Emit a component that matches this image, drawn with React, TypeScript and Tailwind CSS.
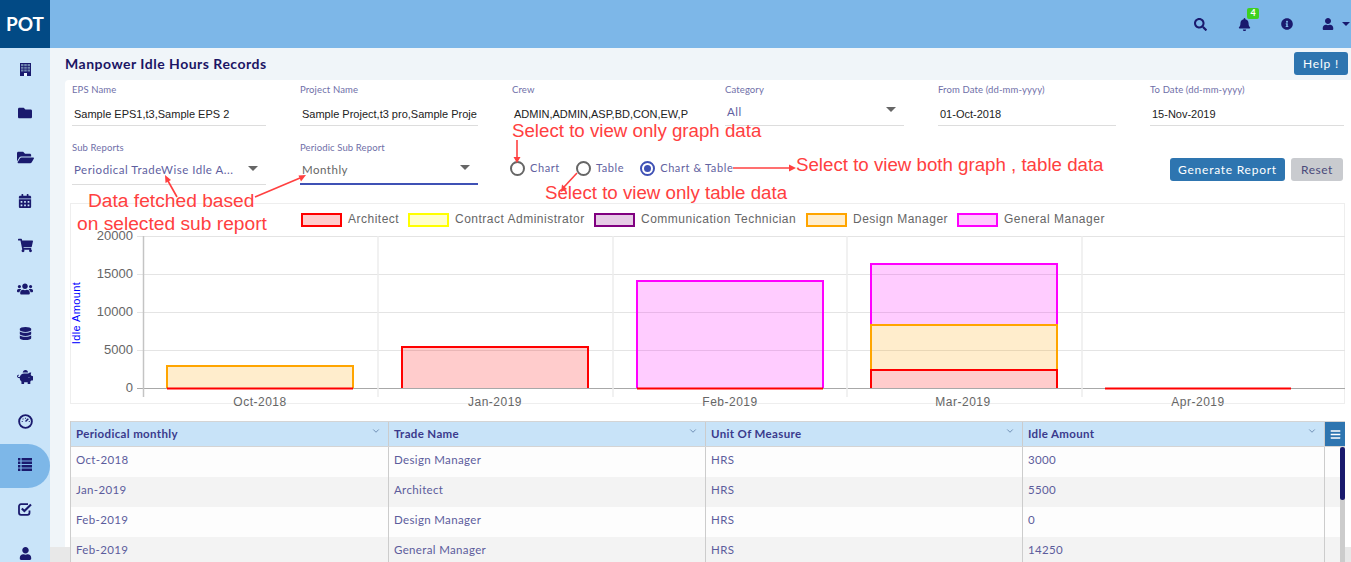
import {
  FaBars,
  FaBell,
  FaCalendarAlt,
  FaDatabase,
  FaFolder,
  FaFolderOpen,
  FaInfoCircle,
  FaPiggyBank,
  FaSearch,
  FaShoppingCart,
  FaUser,
  FaUsers,
} from "react-icons/fa";
import { ChevronDown } from "lucide-react";

function GaugeIcon() {
  return (
    <svg width="15" height="15" viewBox="0 0 16 16" fill="none" stroke="#1a1a6e">
      <circle cx="8" cy="8" r="6.8" strokeWidth="2" />
      <path d="M8 8 L11 5" strokeWidth="1.6" />
      <path d="M4 8h1M8 4v1M11.5 8h1M5 5l.7.7" strokeWidth="1.2" />
    </svg>
  );
}

function BuildingIcon() {
  return (
    <svg width="11" height="13" viewBox="0 0 11 13">
      <rect width="11" height="13" fill="#1a1a6e" />
      <path d="M1 1h2.5v2H1zM4.2 1h2.6v2H4.2zM7.5 1H10v2H7.5zM1 3.7h2.5v2H1zM4.2 3.7h2.6v2H4.2zM7.5 3.7H10v2H7.5zM1 6.4h2.5v2H1zM4.2 6.4h2.6v2H4.2zM7.5 6.4H10v2H7.5z" fill="#6f86ad" />
      <rect x="4" y="10" width="3" height="3" fill="#eaf4fc" />
    </svg>
  );
}

function ListIcon() {
  return (
    <svg width="14" height="13" viewBox="0 0 14 13" fill="#1a1a6e" className="-mt-[2px]">
      <path d="M0 0h2.4v2.4H0zM3.6 0H14v2.4H3.6zM0 3.5h2.4v2.4H0zM3.6 3.5H14v2.4H3.6zM0 7h2.4v2.4H0zM3.6 7H14v2.4H3.6zM0 10.5h2.4v2.4H0zM3.6 10.5H14v2.4H3.6z" />
    </svg>
  );
}

function CheckIcon() {
  return (
    <svg width="14" height="13" viewBox="0 0 14 13" fill="none" stroke="#1a1a6e">
      <path d="M10 1.2H3A2 2 0 0 0 1 3.2v6.6a2 2 0 0 0 2 2h6.5a2 2 0 0 0 2-2V7.5" strokeWidth="1.8" />
      <path d="M3.8 5.4 6.4 8 13 1.6" strokeWidth="2.1" />
    </svg>
  );
}

const navIcons = [
  <BuildingIcon key="a" />,
  <FaFolder key="b" size={14} />,
  <FaFolderOpen key="c" size={17} />,
  <FaCalendarAlt key="d" size={14} />,
  <FaShoppingCart key="e" size={15} />,
  <FaUsers key="f" size={16} />,
  <FaDatabase key="g" size={13} />,
  <FaPiggyBank key="h" size={16} />,
  <GaugeIcon key="i" />,
  <ListIcon key="j" />,
  <CheckIcon key="k" />,
  <FaUser key="l" size={13} />,
];

function Label({ children }: { children: string }) {
  return <div className="h-[12px] text-[9.5px] leading-[12px] tracking-[0.12px] text-[#6f6fa8]">{children}</div>;
}

function TextField({ label, value, line = true }: { label: string; value: string; line?: boolean }) {
  return (
    <div>
      <Label>{label}</Label>
      <div
        className={`mt-[2px] h-[28px] overflow-hidden whitespace-nowrap pl-[2px] font-['Liberation_Sans',sans-serif] text-[11px] leading-[32px] text-[#222] ${
          line ? "border-b border-[#ddd]" : ""
        }`}
      >
        {value}
      </div>
    </div>
  );
}

function SelectField({
  label,
  value,
  active = false,
  muted = false,
  tall = false,
}: {
  label: string;
  value: string;
  active?: boolean;
  muted?: boolean;
  tall?: boolean;
}) {
  return (
    <div>
      <Label>{label}</Label>
      <div
        className={`mt-[2px] flex items-center justify-between pl-[2px] pr-[8px] text-[11.5px] tracking-[0.5px] ${
          tall ? "h-[29px]" : "h-[28px]"
        } ${active ? "border-b-2 border-[#3f51b5]" : "border-b border-[#ddd]"} ${
          muted ? "text-[#666]" : "text-[#5f5f9f]"
        }`}
      >
        <span>{value}</span>
        <span className="mb-[4px] h-0 w-0 border-x-[5px] border-t-[5px] border-x-transparent border-t-[#666]" />
      </div>
    </div>
  );
}

function Radio({ label, checked = false }: { label: string; checked?: boolean }) {
  return (
    <label className="flex items-center gap-[5px] text-[11px] tracking-[0.6px] text-[#6262a0]">
      <span
        className={`flex h-[15px] w-[15px] items-center justify-center rounded-full border-2 ${
          checked ? "border-[#3f51b5]" : "border-[#666]"
        }`}
      >
        {checked && <span className="h-[7px] w-[7px] rounded-full bg-[#3f51b5]" />}
      </span>
      {label}
    </label>
  );
}

const series = [
  { name: "Architect", stroke: "#ff0000", box: 301, text: 348 },
  { name: "Contract Administrator", stroke: "#ffff00", box: 408, text: 455 },
  { name: "Communication Technician", stroke: "#800080", box: 594, text: 641 },
  { name: "Design Manager", stroke: "#ffa500", box: 806, text: 853 },
  { name: "General Manager", stroke: "#ff00ff", box: 957, text: 1004 },
];

const [architect, , , design, general] = series;

const bars = [
  { x: 167, top: 366, bottom: 388, c: design.stroke },
  { x: 402, top: 347, bottom: 388, c: architect.stroke },
  { x: 637, top: 281, bottom: 388, c: general.stroke },
  { x: 871, top: 264, bottom: 325, c: general.stroke },
  { x: 871, top: 325, bottom: 370, c: design.stroke },
  { x: 871, top: 370, bottom: 388, c: architect.stroke },
];

function Chart() {
  const grid = [236, 274, 312, 350, 388];
  const ticks = ["20000", "15000", "10000", "5000", "0"];
  const verticals = [378, 613, 847, 1082];
  const months = [
    ["Oct-2018", 260],
    ["Jan-2019", 495],
    ["Feb-2019", 730],
    ["Mar-2019", 963],
    ["Apr-2019", 1198],
  ] as const;
  const barWidth = 186;
  return (
    <svg
      width="1275"
      height="207"
      viewBox="70 203 1275 207"
      className="block"
      fontFamily="'Liberation Sans', sans-serif"
    >
      <rect x={70.5} y={203.5} width={1274} height={200} fill="none" stroke="#eee" />
      {series.map((s) => (
        <g key={s.name}>
          <rect
            x={s.box + 1}
            y={214}
            width={39}
            height={12}
            fill={s.stroke}
            fillOpacity="0.2"
            stroke={s.stroke}
            strokeWidth="2"
          />
          <text x={s.text} y={223} fontSize="12" letterSpacing="0.5" fill="#666">
            {s.name}
          </text>
        </g>
      ))}
      {grid.map((y, i) => (
        <g key={y}>
          <line x1={137} x2={1345} y1={y + 0.5} y2={y + 0.5} stroke={i === 4 ? "#a8a8a8" : "#e4e4e4"} />
          <text x={133} y={y + 4} textAnchor="end" fontSize="13" fill="#666">
            {ticks[i]}
          </text>
        </g>
      ))}
      <line x1={143.5} x2={143.5} y1={236} y2={397} stroke="#c4c4c4" strokeWidth="1.5" />
      {verticals.map((x) => (
        <line key={x} x1={x} x2={x} y1={236} y2={397} stroke="#ececec" strokeWidth="1.5" />
      ))}
      {months.map(([m, x]) => (
        <text key={m} x={x} y={406} textAnchor="middle" fontSize="12" letterSpacing="0.5" fill="#666">
          {m}
        </text>
      ))}
      <text
        transform="translate(80 313) rotate(-90)"
        textAnchor="middle"
        fontSize="11"
        letterSpacing="0.4"
        fill="#0000ff"
      >
        Idle Amount
      </text>
      {bars.map((b, i) => (
        <g key={i}>
          <rect x={b.x} y={b.top} width={barWidth} height={b.bottom - b.top} fill={b.c} fillOpacity="0.2" />
          <path
            d={`M${b.x} ${b.bottom} V${b.top} H${b.x + barWidth} V${b.bottom}`}
            fill="none"
            stroke={b.c}
            strokeWidth="2"
          />
        </g>
      ))}
      <g stroke={architect.stroke} strokeWidth="2">
        <line x1={167} x2={353} y1={388.5} y2={388.5} />
        <line x1={637} x2={823} y1={388.5} y2={388.5} />
        <line x1={1105} x2={1291} y1={388.5} y2={388.5} />
      </g>
    </svg>
  );
}

const columns = [
  { name: "Periodical monthly", width: "w-[318px]" },
  { name: "Trade Name", width: "w-[317px]" },
  { name: "Unit Of Measure", width: "w-[317px]" },
  { name: "Idle Amount", width: "flex-1" },
];

const rows = [
  ["Oct-2018", "Design Manager", "HRS", "3000"],
  ["Jan-2019", "Architect", "HRS", "5500"],
  ["Feb-2019", "Design Manager", "HRS", "0"],
  ["Feb-2019", "General Manager", "HRS", "14250"],
];

function DataTable() {
  return (
    <div className="relative z-10 mt-[11px] w-[1275px] border-l border-[#ccc] text-[11.5px] tracking-[0.35px]">
      <div className="flex h-[26px] border-y border-[#d4d4d4] bg-[#c8e3f8] font-bold text-[#3a3a8c]">
        {columns.map((c) => (
          <div key={c.name} className={`${c.width} relative flex items-center border-r border-[#ccc] pb-[1px] pl-[5px]`}>
            {c.name}
            <ChevronDown size={10} className="absolute right-[7px] top-[4px] text-[#5f7fa8]" />
          </div>
        ))}
        <div className="flex w-[20px] items-center justify-center bg-[#2e75b0] text-white">
          <FaBars size={11} />
        </div>
      </div>
      <div className="relative">
        {rows.map((r, i) => (
          <div key={i} className={`flex h-[30px] text-[#5c5c9c] ${i % 2 ? "bg-[#f3f3f3]" : "bg-[#fdfdfd]"}`}>
            {r.map((cell, j) => (
              <div
                key={j}
                className={`${columns[j].width} flex items-center border-r border-[#ccc] pb-[5px] pl-[5px] last:border-r-0`}
              >
                {cell}
              </div>
            ))}
            <div className="w-[20px]" />
          </div>
        ))}
        <div className="absolute bottom-0 right-0 top-0 w-[5px] bg-[#ccc]">
          <div className="h-[53px] w-full rounded-full bg-[#1a1a6e]" />
        </div>
      </div>
    </div>
  );
}

function Annotations() {
  const notes = [
    { text: "Select to view only graph data", pos: "left-[512px] top-[120px] text-[18.7px]" },
    { text: "Select to view both graph , table data", pos: "left-[796px] top-[154px] text-[18.7px]" },
    { text: "Select to view only table data", pos: "left-[545px] top-[182px] text-[18.7px]" },
    { text: "Data fetched based", pos: "left-[88px] top-[190px] text-[19.2px]" },
    { text: "on selected sub report", pos: "left-[77px] top-[213px] text-[19.2px]" },
  ];
  const arrows = [
    { line: "M517 140 V158", head: "M513.5 157 L517 163 L520.5 157Z" },
    { line: "M577 173 L564 187", head: "M561 192 L562 184.5 L567 189Z" },
    { line: "M733 168 H790", head: "M789 164.5 L796 168 L789 171.5Z" },
    { line: "M177 197 L168 181", head: "M165 175 L171 180 L165.5 183Z" },
    { line: "M255 197 L300 178", head: "M306 175 L301 181.5 L298.5 175.5Z" },
  ];
  return (
    <div className="pointer-events-none absolute inset-0 z-20 font-['Liberation_Sans',sans-serif] leading-[22px] text-[#ff4040]">
      {notes.map((n) => (
        <span key={n.text} className={`absolute whitespace-nowrap ${n.pos}`}>
          {n.text}
        </span>
      ))}
      <svg width="1351" height="562" className="absolute left-0 top-0">
        {arrows.map((a) => (
          <g key={a.line}>
            <path d={a.line} stroke="#ff4040" strokeWidth="1.6" fill="none" />
            <path d={a.head} fill="#ff4040" />
          </g>
        ))}
      </svg>
    </div>
  );
}

export default function App() {
  return (
    <div className="relative flex h-[562px] w-[1351px] flex-col overflow-hidden font-['Lato',sans-serif]">
      <header className="flex h-[48px] shrink-0 items-center bg-[#7db7e8] text-[#1a1a6e]">
        <div className="flex h-full w-[50px] items-center justify-center bg-[#024a85] text-[19px] font-bold text-white">
          POT
        </div>
        <div className="flex-1" />
        <FaSearch size={13} className="mr-[31px]" />
        <div className="relative mr-[30px]">
          <FaBell size={13} />
          <span className="absolute -top-[10px] left-[9px] flex h-[11px] w-[12px] items-center justify-center rounded-[2px] bg-[#3ed11f] text-[9px] font-bold text-white">
            4
          </span>
        </div>
        <FaInfoCircle size={12} className="mr-[29px]" />
        <FaUser size={12} className="mr-[8px]" />
        <span className="mr-[1px] h-0 w-0 border-x-[4px] border-t-[4px] border-x-transparent border-t-[#1a1a6e]" />
      </header>
      <div className="flex min-h-0 flex-1">
        <nav className="w-[50px] shrink-0 bg-[#c9e4f9] text-[#1a1a6e]">
          {navIcons.map((icon, i) => (
            <div
              key={i}
              className={`flex h-[44px] items-center justify-center pb-[2px] ${
                i === 9 ? "rounded-r-full bg-[#7db7e8]" : ""
              }`}
            >
              {icon}
            </div>
          ))}
        </nav>
        <main className="relative min-w-0 flex-1 bg-[#f0f5f9] pl-[15px]">
          <div className="flex h-[32px] items-center justify-between pr-[3px]">
            <h1 className="-mt-[1px] text-[14px] font-bold tracking-[0.5px] text-[#1b1464]">
              Manpower Idle Hours Records
            </h1>
            <button className="-mt-[1px] h-[23px] w-[54px] rounded-[3px] bg-[#2e75b0] text-[12px] tracking-[0.8px] text-white">
              Help !
            </button>
          </div>
          <section className="h-[500px] rounded-tl-[4px] bg-white pl-[5px]">
            <div className="grid grid-cols-[194px_178px_179px_179px_178px_194px] gap-x-[34px] pl-[2px] pt-[4px]">
              <TextField label="EPS Name" value="Sample EPS1,t3,Sample EPS 2" />
              <TextField label="Project Name" value="Sample Project,t3 pro,Sample Proje" />
              <div className="-mr-[20px]">
                <TextField label="Crew" value="ADMIN,ADMIN,ASP,BD,CON,EW,P" line={false} />
              </div>
              <SelectField label="Category" value="All" />
              <TextField label="From Date (dd-mm-yyyy)" value="01-Oct-2018" />
              <TextField label="To Date (dd-mm-yyyy)" value="15-Nov-2019" />
            </div>
            <div className="mt-[16px] flex items-start pl-[2px]">
              <div className="w-[194px]">
                <SelectField label="Sub Reports" value="Periodical TradeWise Idle A..." tall />
              </div>
              <div className="ml-[34px] w-[178px]">
                <SelectField label="Periodic Sub Report" value="Monthly" active muted tall />
              </div>
              <div className="ml-[32px] mt-[18px] flex gap-[16px]">
                <Radio label="Chart" />
                <Radio label="Table" />
                <Radio label="Chart & Table" checked />
              </div>
              <div className="ml-auto mr-[8px] mt-[16px] flex gap-[6px]">
                <button className="h-[23px] w-[115px] rounded-[3px] bg-[#2e75b0] text-[12px] tracking-[0.75px] text-white">
                  Generate Report
                </button>
                <button className="h-[23px] w-[52px] rounded-[3px] bg-[#c9cbcf] text-[12px] tracking-[0.5px] text-[#4a4a7a]">
                  Reset
                </button>
              </div>
            </div>
            <div className="mt-[18px]">
              <Chart />
            </div>
            <DataTable />
          </section>
          <div className="absolute bottom-0 left-0 right-0 h-[15px] bg-[#e8e8e8]" />
        </main>
      </div>
      <Annotations />
    </div>
  );
}
